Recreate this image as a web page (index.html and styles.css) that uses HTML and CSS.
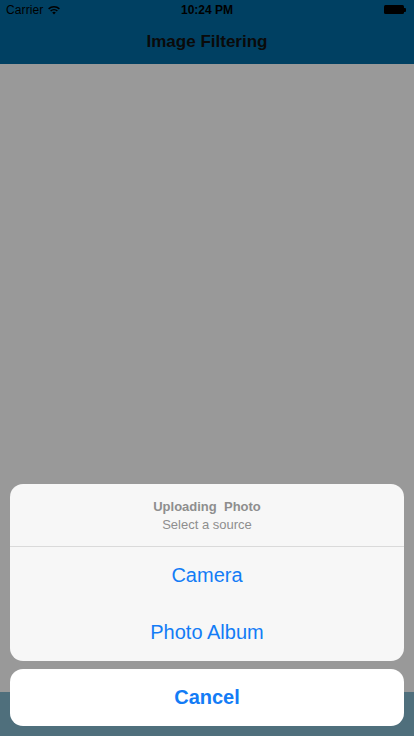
FILE: index.html
```html
<!DOCTYPE html>
<html>
<head>
<meta charset="utf-8">
<link rel="stylesheet" href="styles.css">
</head>
<body>
<div class="screen">
  <header class="top">
    <div class="status">
      <div class="status-left">
        <span class="carrier">Carrier</span>
        <svg class="wifi" width="14" height="10" viewBox="0 0 14 10">
          <path d="M7 9.5 L5.2 7.6 A2.6 2.6 0 0 1 8.8 7.6 Z" fill="#000"/>
          <path d="M3.6 6 A4.9 4.9 0 0 1 10.4 6" stroke="#000" stroke-width="1.5" fill="none"/>
          <path d="M1.6 3.9 A7.7 7.7 0 0 1 12.4 3.9" stroke="#000" stroke-width="1.5" fill="none"/>
        </svg>
      </div>
      <span class="time">10:24 PM</span>
      <div class="status-right">
        <span class="battery"></span><span class="battery-tip"></span>
      </div>
    </div>
    <div class="navbar">Image Filtering</div>
  </header>
  <main class="content"></main>
  <footer class="toolbar"></footer>

  <div class="sheet">
    <div class="group">
      <div class="sheet-head">
        <div class="sheet-title">Uploading&nbsp; Photo</div>
        <div class="sheet-sub">Select a source</div>
      </div>
      <div class="sheet-btn">Camera</div>
      <div class="sheet-btn">Photo Album</div>
    </div>
    <div class="cancel">Cancel</div>
  </div>
</div>
</body>
</html>
```
FILE: styles.css
```css
* { box-sizing: border-box; }
html, body { margin: 0; padding: 0; }
body {
  width: 414px;
  height: 736px;
  overflow: hidden;
  font-family: "Liberation Sans", Arial, sans-serif;
}
.screen {
  position: relative;
  width: 414px;
  height: 736px;
  display: flex;
  flex-direction: column;
}
.top {
  background: #004062;
  height: 64px;
  display: flex;
  flex-direction: column;
}
.status {
  height: 20px;
  display: flex;
  align-items: center;
  justify-content: space-between;
  padding: 0 8px 0 6px;
  position: relative;
  font-size: 12px;
  color: #000;
}
.status-left { display: flex; align-items: center; gap: 4px; }
.carrier { letter-spacing: 0.1px; }
.wifi { margin-top: -1px; }
.time {
  position: absolute;
  left: 0; right: 0;
  text-align: center;
  font-weight: bold;
  pointer-events: none;
}
.status-right { display: flex; align-items: center; margin-top: -1px; }
.battery {
  width: 20px;
  height: 9px;
  background: #000;
  border-radius: 1.5px;
}
.battery-tip {
  width: 2px;
  height: 4px;
  background: #000;
  border-radius: 0 1px 1px 0;
}
.navbar {
  height: 44px;
  display: flex;
  align-items: center;
  justify-content: center;
  font-size: 17px;
  font-weight: bold;
  color: #0a0a0a;
}
.content {
  flex: 1;
  background: #999999;
}
.toolbar {
  height: 44px;
  background: #4f6f7c;
}
.sheet {
  position: absolute;
  left: 10px;
  right: 10px;
  bottom: 10px;
  display: flex;
  flex-direction: column;
  gap: 8px;
}
.group {
  background: #f7f7f7;
  border-radius: 13px;
  overflow: hidden;
}
.sheet-head {
  height: 63px;
  border-bottom: 1px solid #dadada;
  display: flex;
  flex-direction: column;
  align-items: center;
  justify-content: center;
  gap: 3px;
  padding-top: 1px;
}
.sheet-title {
  font-size: 13px;
  font-weight: bold;
  color: #8e8e8e;
}
.sheet-sub {
  font-size: 13px;
  color: #8e8e8e;
}
.sheet-btn {
  height: 57px;
  display: flex;
  align-items: center;
  justify-content: center;
  font-size: 20px;
  color: #137cf6;
}
.cancel {
  height: 57px;
  background: #fff;
  border-radius: 13px;
  display: flex;
  align-items: center;
  justify-content: center;
  font-size: 20px;
  font-weight: bold;
  color: #137cf6;
}
```
